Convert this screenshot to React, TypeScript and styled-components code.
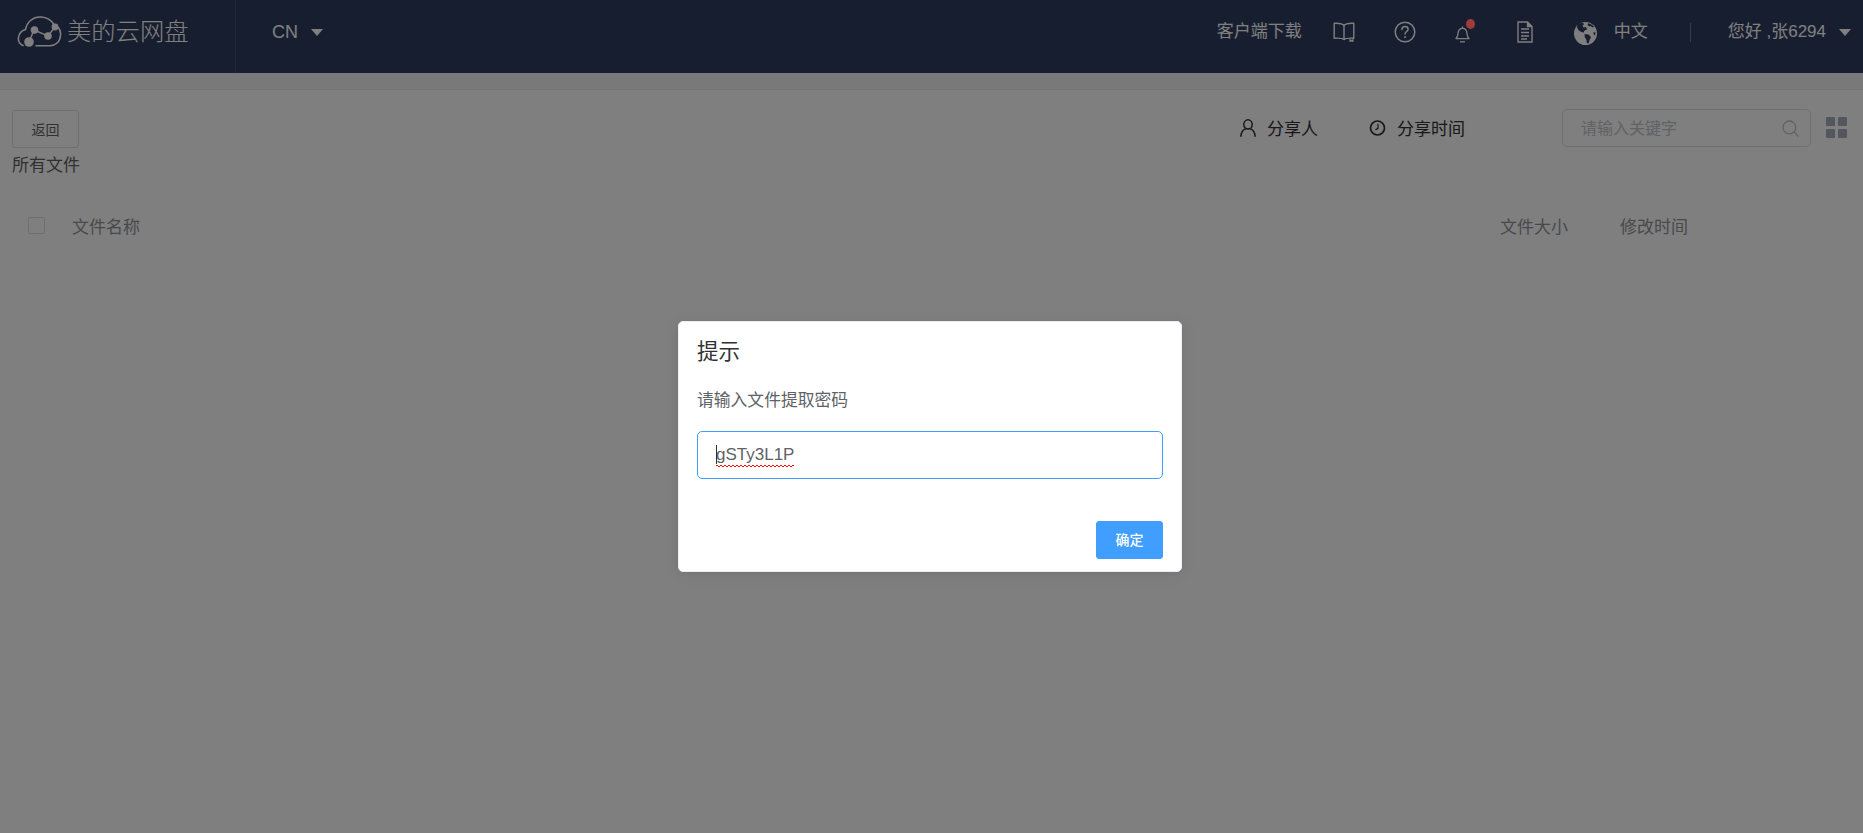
import React from "react";
import styled, { createGlobalStyle } from "styled-components";

const Global = createGlobalStyle`
  html, body { margin: 0; padding: 0; height: 100%; background: #fff; overflow: hidden; }
  body { font-family: "Liberation Sans", "Noto Sans CJK SC", sans-serif; }
  * { box-sizing: border-box; }
`;

const Page = styled.div`
  width: 1863px;
  height: 833px;
  background: #fff;
  position: relative;
  overflow: hidden;
`;

const Header = styled.header`
  height: 73px;
  background: #2e3c5e;
  display: flex;
  align-items: stretch;
  color: #fff;
`;

const Brand = styled.div`
  width: 236px;
  display: flex;
  align-items: center;
  padding: 0 0 9px 17px;
  border-right: 1px solid #3e4c6e;
`;

const BrandName = styled.span`
  margin-left: 4px;
  font-size: 24.3px;
  font-weight: 300;
  line-height: 32px;
  white-space: nowrap;
  color: #fff;
`;

const Region = styled.div`
  margin-left: 36px;
  padding-bottom: 9px;
  display: flex;
  align-items: center;
  font-size: 18px;
`;

const Caret = styled.i<{ $ml: number }>`
  display: block;
  margin-left: ${(p) => p.$ml}px;
  width: 0;
  height: 0;
  border-left: 6px solid transparent;
  border-right: 6px solid transparent;
  border-top: 7px solid #fff;
`;

const Nav = styled.nav`
  margin-left: auto;
  padding: 0 12px 9px 0;
  display: flex;
  align-items: center;
  font-size: 17px;
  white-space: nowrap;
`;

const NavText = styled.span<{ $ml?: number }>`
  margin-left: ${(p) => p.$ml ?? 0}px;
  line-height: 24px;
`;

const NavIcon = styled.span<{ $ml: number; $mt?: number }>`
  margin-left: ${(p) => p.$ml}px;
  margin-top: ${(p) => p.$mt ?? 0}px;
  display: flex;
  position: relative;
`;

const Badge = styled.i`
  position: absolute;
  z-index: 1;
  right: -5px;
  top: -7px;
  width: 9px;
  height: 10px;
  border-radius: 50%;
  background: #9e3c3c;
`;

const NavDivider = styled.i`
  display: block;
  margin-left: 42px;
  width: 1px;
  height: 19px;
  background: #6a7488;
`;

const Band = styled.div`
  height: 17px;
  background: #f2f2f2;
  border-bottom: 1px solid #e8e8ea;
`;

const Content = styled.main`
  padding: 20px 16px 0 12px;
`;

const TopRow = styled.div`
  display: flex;
  align-items: flex-start;
  justify-content: space-between;
`;

const LeftCol = styled.div`
  display: flex;
  flex-direction: column;
  align-items: flex-start;
`;

const BackButton = styled.button`
  width: 67px;
  height: 38px;
  padding: 0;
  background: #fff;
  border: 1px solid #dcdfe6;
  border-radius: 3px;
  color: #606266;
  font: inherit;
  font-size: 14px;
`;

const Crumb = styled.div`
  padding-top: 2px;
  font-size: 17px;
  line-height: 32px;
  color: #606266;
`;

const Tools = styled.div`
  margin-top: -1px;
  display: flex;
  align-items: center;
  height: 38px;
`;

const Filter = styled.div<{ $mr: number }>`
  display: flex;
  align-items: center;
  margin-right: ${(p) => p.$mr}px;
  padding-bottom: 1px;
  color: #303133;
  font-size: 17px;
  white-space: nowrap;
  svg { display: block; margin-right: 11px; }
`;

const Search = styled.div`
  width: 249px;
  height: 38px;
  padding: 0 11px 2px 18px;
  display: flex;
  align-items: center;
  justify-content: space-between;
  border: 1px solid #dcdfe6;
  border-radius: 5px;
  background: #fff;
  color: #c0c4cc;
  font-size: 16px;
  svg { margin-top: 2px; }
`;

const Grid = styled.div`
  margin-left: 15px;
  margin-top: -1px;
  display: grid;
  grid-template-columns: 9px 9px;
  grid-template-rows: 9px 9px;
  gap: 3px;
  span { background: #a9adbd; border-radius: 1px; }
`;

const TableHead = styled.div`
  margin-top: 17px;
  height: 52px;
  display: flex;
  align-items: center;
  padding-left: 16px;
  color: #909399;
  font-size: 17px;
  white-space: nowrap;
`;

const Check = styled.i`
  display: block;
  width: 17px;
  height: 17px;
  background: #fff;
  border: 1px solid #dcdfe6;
  border-radius: 2px;
`;

const HeadCell = styled.span<{ $ml: number | string }>`
  margin-left: ${(p) => (typeof p.$ml === "number" ? `${p.$ml}px` : p.$ml)};
`;

const Overlay = styled.div`
  position: absolute;
  inset: 0;
  background: rgba(0, 0, 0, 0.5);
  display: flex;
  justify-content: center;
  align-items: flex-start;
  padding: 321px 3px 0 0;
`;

const Dialog = styled.div`
  width: 504px;
  height: 251px;
  background: #fff;
  border: 1px solid #ebeef5;
  border-radius: 5px;
  box-shadow: 0 2px 14px rgba(0, 0, 0, 0.1);
  padding: 15px 18px 0;
  display: flex;
  flex-direction: column;
`;

const Title = styled.h2`
  margin: 0;
  font-size: 21.5px;
  line-height: 30px;
  font-weight: 400;
  color: #303133;
`;

const Message = styled.p`
  margin: 22px 0 0;
  font-size: 16.8px;
  line-height: 24px;
  color: #606266;
`;

const Field = styled.div`
  margin-top: 18px;
  height: 48px;
  border: 1px solid #409eff;
  border-radius: 5px;
  display: flex;
  align-items: center;
  padding-left: 18px;
  font-size: 17px;
  color: #606266;
`;

const Typed = styled.span`
  position: relative;
  line-height: 24px;
  &::before {
    content: "";
    position: absolute;
    left: 0;
    top: 2px;
    width: 1px;
    height: 19px;
    background: #303133;
  }
  &::after {
    content: "";
    position: absolute;
    left: 0;
    right: 0;
    bottom: 0;
    height: 2px;
    background-image:
      linear-gradient(45deg, transparent 40%, #f00 40%, #f00 60%, transparent 60%),
      linear-gradient(135deg, transparent 40%, #f00 40%, #f00 60%, transparent 60%);
    background-size: 4px 2px;
    background-position: 0 0, 2px 0;
    background-repeat: repeat-x;
  }
`;

const Footer = styled.div`
  margin-top: 42px;
  display: flex;
  justify-content: flex-end;
`;

const Confirm = styled.button`
  width: 67px;
  height: 38px;
  padding: 0 0 2px;
  border: 1px solid #409eff;
  border-radius: 3px;
  background: #409eff;
  color: #fff;
  font: inherit;
  font-size: 14px;
  font-weight: 500;
`;

const Logo = () => (
  <svg width="46" height="34" viewBox="17 14 46 34" fill="none">
    <path
      d="M23 44.5C19.5 43 18 40 18.5 36.5C19 32 22 29.5 25.5 28.5C27 21 33 15.5 41 16C47 16.3 51.5 19.5 54 23.5C58.5 25.5 61 29.5 60.5 34.5C60 41 55.5 44.5 50 44.8L36 44.8"
      stroke="#fff"
      strokeWidth="1.6"
      strokeLinecap="round"
    />
    <path d="M29 41L34 29L48 35L55 26" stroke="#fff" strokeWidth="1.4" />
    <circle cx="29" cy="41" r="4.8" fill="#fff" />
    <circle cx="34.5" cy="29" r="3.8" fill="#fff" />
    <circle cx="48" cy="35" r="3.8" fill="#fff" />
    <circle cx="55" cy="26" r="3.4" fill="#fff" />
  </svg>
);

const BookIcon = () => (
  <svg width="22" height="20" viewBox="0 0 22 20" fill="none" stroke="#fff" strokeWidth="1.4" strokeLinejoin="round">
    <path d="M11 3.5C9.5 1.5 7 1 1.2 1.3V16.2C6 16 9.5 16.2 11 17.5C12.5 16.2 16 16 20.8 16.2V1.3C15 1 12.5 1.5 11 3.5Z" />
    <path d="M11 3.5V17.5" />
    <path d="M17 16.5V19.5L18.5 18.3L20 19.5V16.5" strokeWidth="1.1" />
  </svg>
);

const HelpIcon = () => (
  <svg width="22" height="22" viewBox="0 0 22 22" fill="none" stroke="#fff" strokeWidth="1.5" strokeLinecap="round">
    <circle cx="11" cy="11" r="9.8" />
    <path d="M7.9 8.4C7.9 6.6 9.3 5.5 11 5.5C12.8 5.5 14.1 6.7 14.1 8.2C14.1 10.4 11 10.6 11 13" />
    <circle cx="11" cy="16" r="0.6" fill="#fff" strokeWidth="0.8" />
  </svg>
);

const BellIcon = () => (
  <svg width="15" height="17" viewBox="0 0 15 17" fill="none" stroke="#fff" strokeWidth="1.3" strokeLinejoin="round">
    <path d="M1 12.6C2.8 11 2.9 9 3.2 6.6C3.5 4 5.2 2.4 7.5 2.4C9.8 2.4 11.5 4 11.8 6.6C12.1 9 12.2 11 14 12.6Z" />
    <path d="M7.5 0.4V2.4" />
    <path d="M5 15.8H10" />
  </svg>
);

const DocIcon = () => (
  <svg width="16" height="22" viewBox="0 0 16 22" fill="none" stroke="#fff" strokeWidth="1.4">
    <path d="M1 1H10.5L15 5.5V21H1Z" />
    <path d="M10.5 1V5.5H15" fill="#fff" />
    <path d="M4 8H12M4 11.5H12M4 15H12M4 18H10" strokeWidth="1.3" />
  </svg>
);

const GlobeIcon = () => (
  <svg width="23" height="23" viewBox="0 0 23 23">
    <circle cx="11.5" cy="11.5" r="11.5" fill="#fff" />
    <path
      d="M3.5 2.8C5 1.6 7 0.9 9 0.8L10 2.5L8.5 3.5L9.5 5.5L12 5L13 7.5L10.5 8.5L9.5 10.8L6.5 9.5L4.5 8.2L3 5.2Z"
      fill="#2e3c5e"
    />
    <path
      d="M14 1.2C16.5 1.8 18.6 3 20 4.8L18.3 5.4L16.8 4L15.2 4.6L13.6 3Z"
      fill="#2e3c5e"
    />
    <path
      d="M10.5 12L14.5 12.5L17 15L15.6 18L14.6 21.5L12.8 21L12.5 18L10.8 15.2Z"
      fill="#2e3c5e"
    />
    <path d="M19.5 10L21.5 10.5L21 13.5L19.8 12.5Z" fill="#2e3c5e" />
  </svg>
);

const UserIcon = () => (
  <svg width="16" height="18" viewBox="0 0 16 18" fill="none" stroke="#303133" strokeWidth="1.5" strokeLinecap="round">
    <ellipse cx="8" cy="5.4" rx="4.2" ry="4.6" />
    <path d="M1 17.2C1 13 3.6 10.6 5.6 9.6M15 17.2C15 13 12.4 10.6 10.4 9.6" />
  </svg>
);

const ClockIcon = () => (
  <svg width="17" height="16" viewBox="0 0 17 16" fill="none" stroke="#303133" strokeWidth="1.7" strokeLinecap="round">
    <circle cx="8.5" cy="8" r="7" />
    <path d="M9 4.2V8.4L6.8 9.6" strokeWidth="1.2" />
  </svg>
);

const SearchIcon = () => (
  <svg width="17" height="17" viewBox="0 0 17 17" fill="none" stroke="#c0c4cc" strokeWidth="1.3" strokeLinecap="round">
    <circle cx="7.4" cy="7.4" r="6.4" />
    <path d="M12 12L16 16" />
  </svg>
);

export default function App() {
  return (
    <Page>
      <Global />
      <Header>
        <Brand>
          <Logo />
          <BrandName>美的云网盘</BrandName>
        </Brand>
        <Region>
          CN
          <Caret $ml={13} />
        </Region>
        <Nav>
          <NavText>客户端下载</NavText>
          <NavIcon $ml={31}><BookIcon /></NavIcon>
          <NavIcon $ml={39}><HelpIcon /></NavIcon>
          <NavIcon $ml={39} $mt={4}><BellIcon /><Badge /></NavIcon>
          <NavIcon $ml={47}><DocIcon /></NavIcon>
          <NavIcon $ml={41} $mt={2}><GlobeIcon /></NavIcon>
          <NavText $ml={17}>中文</NavText>
          <NavDivider />
          <NavText $ml={37}>您好 ,张6294</NavText>
          <Caret $ml={13} />
        </Nav>
      </Header>
      <Band />
      <Content>
        <TopRow>
          <LeftCol>
            <BackButton>返回</BackButton>
            <Crumb>所有文件</Crumb>
          </LeftCol>
          <Tools>
            <Filter $mr={51}><UserIcon />分享人</Filter>
            <Filter $mr={97}><ClockIcon />分享时间</Filter>
            <Search>
              请输入关键字
              <SearchIcon />
            </Search>
            <Grid>
              <span /><span /><span /><span />
            </Grid>
          </Tools>
        </TopRow>
        <TableHead>
          <Check />
          <HeadCell $ml={27}>文件名称</HeadCell>
          <HeadCell $ml="auto">文件大小</HeadCell>
          <HeadCell $ml={52}>修改时间</HeadCell>
          <HeadCell $ml={159} />
        </TableHead>
      </Content>
      <Overlay>
        <Dialog>
          <Title>提示</Title>
          <Message>请输入文件提取密码</Message>
          <Field><Typed>gSTy3L1P</Typed></Field>
          <Footer>
            <Confirm>确定</Confirm>
          </Footer>
        </Dialog>
      </Overlay>
    </Page>
  );
}
